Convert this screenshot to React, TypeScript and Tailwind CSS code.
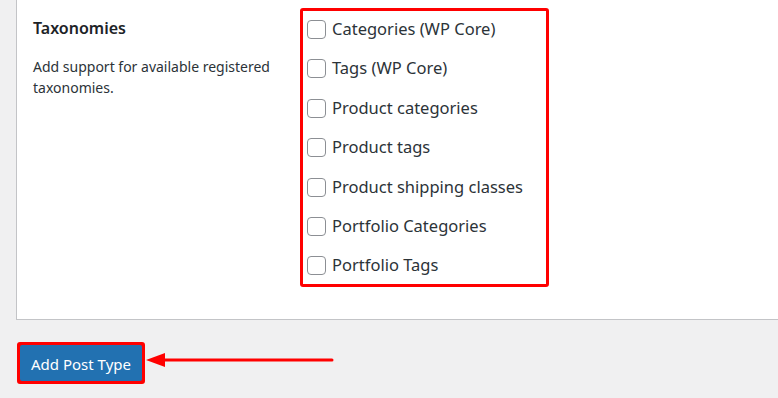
const taxonomies = [
  "Categories (WP Core)",
  "Tags (WP Core)",
  "Product categories",
  "Product tags",
  "Product shipping classes",
  "Portfolio Categories",
  "Portfolio Tags",
];

export default function App() {
  return (
    <div className="h-[398px] w-[778px] overflow-hidden bg-[#f0f0f1] font-['Noto_Sans',sans-serif] text-[#1d2327]">
      <div className="ml-4 flex h-[320px] border-b border-l border-[#c3c4c7] bg-white">
        <div className="w-[283px] pl-4 pt-[16px]">
          <h2 className="text-[16px] font-semibold leading-[24px]">Taxonomies</h2>
          <p className="mt-[16px] text-[14px] leading-[21px] text-[#2c3338]">
            Add support for available registered taxonomies.
          </p>
        </div>
        <div className="mt-[8px] h-[279px] w-[249px] rounded-[3px] border-[3px] border-[#ff0000] pl-[4px] pt-[6px]">
          {taxonomies.map((t) => (
            <label key={t} className="flex h-[39.4px] items-start gap-[6px]">
              <span className="mt-[3px] h-[19px] w-[19px] shrink-0 rounded-[4px] border border-[#8c8f94] bg-white" />
              <span className="text-[16.5px] leading-[24px] text-[#2c3338]">{t}</span>
            </label>
          ))}
        </div>
      </div>
      <div className="ml-[17px] mt-[22px] flex items-center">
        <div className="rounded-[3px] border-[3px] border-[#ff0000] bg-[#ff0000]">
          <button className="h-[36px] w-[122px] rounded-[2px] bg-[#2271b1] pt-[3px] text-[15px] leading-[33px] text-white">
            Add Post Type
          </button>
        </div>
        <svg width="190" height="16" viewBox="0 0 190 16" className="ml-[1px] mt-[-6px]">
          <polygon points="0,8 19,1 19,15" fill="#ff0000" />
          <line x1="17" y1="8" x2="186" y2="8" stroke="#ff0000" strokeWidth="3" strokeLinecap="round" />
        </svg>
      </div>
    </div>
  );
}
